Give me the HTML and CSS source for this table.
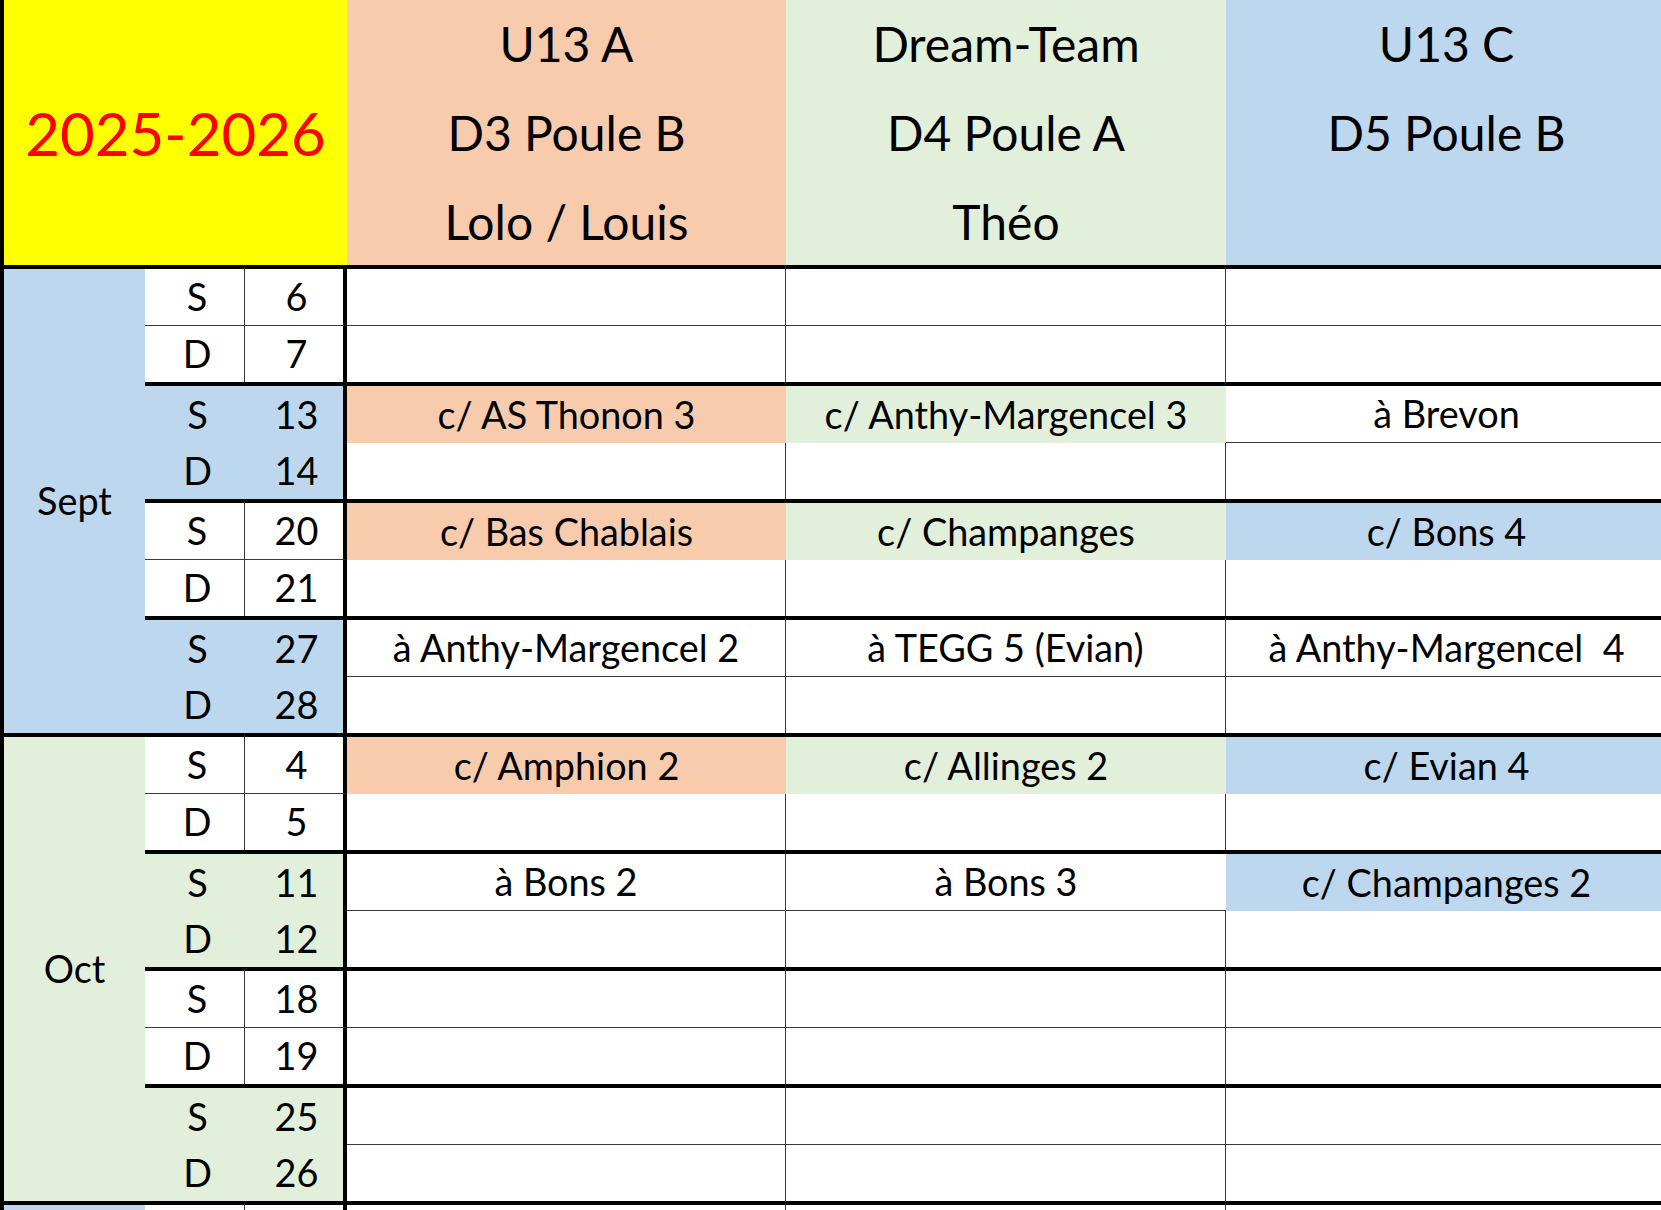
FILE: index.html
```html
<!DOCTYPE html>
<html lang="fr">
<head>
<meta charset="utf-8">
<title>Planning U13 2025-2026</title>
<link rel="stylesheet" href="styles.css">
</head>
<body>
<div class="viewport">
<div class="sheet">
  <div class="year">2025-2026</div>
  <div class="team peach"><div class="hl">U13 A</div><div class="hl">D3 Poule B</div><div class="hl">Lolo / Louis</div></div>
  <div class="team green"><div class="hl">Dream-Team</div><div class="hl">D4 Poule A</div><div class="hl">Théo</div></div>
  <div class="team blue"><div class="hl">U13 C</div><div class="hl">D5 Poule B</div><div class="hl"></div></div>

  <!-- SEPTEMBRE -->
  <div class="c month top blue span8">Sept</div>
  <!-- week 6/7 -->
  <div class="c day top bb br">S</div><div class="c day top bb thr">6</div>
  <div class="c top bb br"></div><div class="c top bb br"></div><div class="c top bb"></div>
  <div class="c day br">D</div><div class="c day thr">7</div>
  <div class="c br"></div><div class="c br"></div><div class="c"></div>
  <!-- week 13/14 -->
  <div class="c day top blue">S</div><div class="c day top blue thr">13</div>
  <div class="c top peach">c/ AS Thonon 3</div><div class="c top green">c/ Anthy-Margencel 3</div><div class="c top bb">à Brevon</div>
  <div class="c day blue">D</div><div class="c day blue thr">14</div>
  <div class="c br"></div><div class="c br"></div><div class="c"></div>
  <!-- week 20/21 -->
  <div class="c day top bb br">S</div><div class="c day top bb thr">20</div>
  <div class="c top peach">c/ Bas Chablais</div><div class="c top green">c/ Champanges</div><div class="c top blue">c/ Bons 4</div>
  <div class="c day br">D</div><div class="c day thr">21</div>
  <div class="c br"></div><div class="c br"></div><div class="c"></div>
  <!-- week 27/28 -->
  <div class="c day top blue">S</div><div class="c day top blue thr">27</div>
  <div class="c top bb br">à Anthy-Margencel 2</div><div class="c top bb br">à TEGG 5 (Evian)</div><div class="c top bb">à Anthy-Margencel  4</div>
  <div class="c day blue">D</div><div class="c day blue thr">28</div>
  <div class="c br"></div><div class="c br"></div><div class="c"></div>

  <!-- OCTOBRE -->
  <div class="c month top green span8">Oct</div>
  <!-- week 4/5 -->
  <div class="c day top bb br">S</div><div class="c day top bb thr">4</div>
  <div class="c top peach">c/ Amphion 2</div><div class="c top green">c/ Allinges 2</div><div class="c top blue">c/ Evian 4</div>
  <div class="c day br">D</div><div class="c day thr">5</div>
  <div class="c br"></div><div class="c br"></div><div class="c"></div>
  <!-- week 11/12 -->
  <div class="c day top green">S</div><div class="c day top green thr">11</div>
  <div class="c top bb br">à Bons 2</div><div class="c top bb">à Bons 3</div><div class="c top blue">c/ Champanges 2</div>
  <div class="c day green">D</div><div class="c day green thr">12</div>
  <div class="c br"></div><div class="c br"></div><div class="c"></div>
  <!-- week 18/19 -->
  <div class="c day top bb br">S</div><div class="c day top bb thr">18</div>
  <div class="c top bb br"></div><div class="c top bb br"></div><div class="c top bb"></div>
  <div class="c day br">D</div><div class="c day thr">19</div>
  <div class="c br"></div><div class="c br"></div><div class="c"></div>
  <!-- week 25/26 -->
  <div class="c day top green">S</div><div class="c day top green thr">25</div>
  <div class="c top bb br"></div><div class="c top bb br"></div><div class="c top bb"></div>
  <div class="c day green">D</div><div class="c day green thr">26</div>
  <div class="c br"></div><div class="c br"></div><div class="c"></div>

  <!-- NOVEMBRE (début, hors champ) -->
  <div class="c month top blue span2"></div>
  <div class="c top bb br"></div><div class="c top bb thr"></div>
  <div class="c top bb br"></div><div class="c top bb br"></div><div class="c top bb"></div>
  <div class="c br"></div><div class="c thr"></div>
  <div class="c br"></div><div class="c br"></div><div class="c"></div>
</div>
</div>
</body>
</html>
```
FILE: styles.css
```css
html, body {
  margin: 0;
  padding: 0;
  background: #ffffff;
  overflow: hidden;
}

.viewport {
  width: 1661px;
  height: 1210px;
  overflow: hidden;
}

.sheet {
  display: grid;
  width: 1667px;
  grid-template-columns: 145px 100px 102px 439px 440px 441px;
  grid-template-rows: 265px repeat(9, 61px 56px);
  font-family: "Lato", "Liberation Sans", sans-serif;
  color: #000;
}

.year {
  grid-column: 1 / 4;
  background: #ffff00;
  color: #ff0000;
  border-left: 4px solid #000;
  box-sizing: border-box;
  display: flex;
  align-items: center;
  justify-content: center;
  font-size: 60px;
}

.team {
  display: flex;
  flex-direction: column;
  justify-content: center;
  align-items: center;
  font-size: 48px;
}

.hl {
  height: 89px;
  line-height: 89px;
  flex: none;
  white-space: nowrap;
}

.c {
  box-sizing: border-box;
  display: flex;
  align-items: center;
  justify-content: center;
  font-size: 37.8px;
  line-height: 1;
  white-space: pre;
  overflow: hidden;
}

.day {
  padding-left: 5px;
}

.month {
  border-left: 4px solid #000;
}

.span8 { grid-row: span 8; }
.span2 { grid-row: span 2; }

.top { border-top: 4px solid #000; }
.bb { border-bottom: 1px solid #3a3a3a; }
.br { border-right: 1px solid #3a3a3a; }
.thr { border-right: 4px solid #000; }

.peach { background: #f8cbad; }
.green { background: #e2efda; }
.blue { background: #bdd7ee; }
```
